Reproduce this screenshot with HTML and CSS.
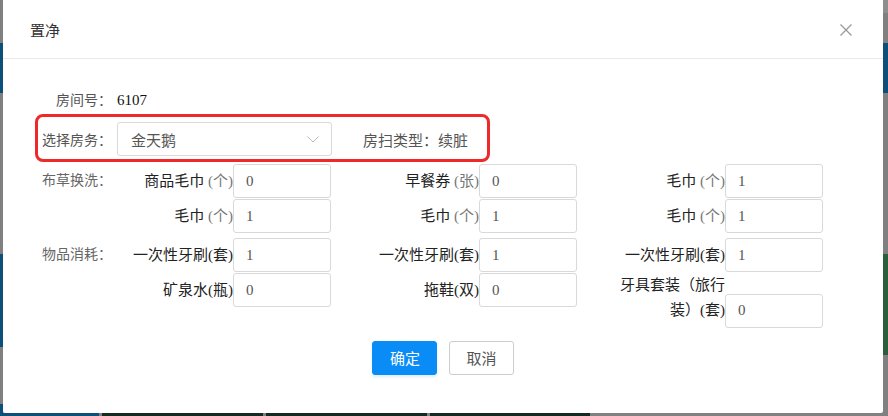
FILE: index.html
```html
<!DOCTYPE html>
<html lang="zh-CN">
<head>
<meta charset="utf-8">
<title>置净</title>
<link rel="stylesheet" href="styles.css">
</head>
<body>
<div class="modal">
  <div class="modal-header">
    <span class="modal-title">置净</span>
    <span class="close"><svg width="12" height="12" viewBox="0 0 12 12"><path d="M0.5 0.5L11.5 11.5M11.5 0.5L0.5 11.5" stroke="#999" stroke-width="1.3" fill="none"/></svg></span>
  </div>
  <div class="modal-body">
    <div class="field-row room-row">
      <span class="field-label">房间号：</span><span class="room-no">6107</span>
    </div>
    <div class="field-row select-row">
      <span class="field-label">选择房务：</span>
      <div class="select"><span>金天鹅</span><svg width="12" height="7" viewBox="0 0 12 7"><path d="M0.5 0.5L6 6L11.5 0.5" stroke="#bbb" stroke-width="1" fill="none"/></svg></div>
      <span class="clean-type">房扫类型：续脏</span>
    </div>
    <div class="section">
      <span class="section-label">布草换洗：</span>
      <div class="items">
        <div class="item"><span class="item-label">商品毛巾 <span class="unit">(个)</span></span><input class="num" type="text" value="0"></div>
        <div class="item"><span class="item-label">早餐券 <span class="unit">(张)</span></span><input class="num" type="text" value="0"></div>
        <div class="item"><span class="item-label">毛巾 <span class="unit">(个)</span></span><input class="num" type="text" value="1"></div>
        <div class="item"><span class="item-label">毛巾 <span class="unit">(个)</span></span><input class="num" type="text" value="1"></div>
        <div class="item"><span class="item-label">毛巾 <span class="unit">(个)</span></span><input class="num" type="text" value="1"></div>
        <div class="item"><span class="item-label">毛巾 <span class="unit">(个)</span></span><input class="num" type="text" value="1"></div>
      </div>
    </div>
    <div class="section second">
      <span class="section-label">物品消耗：</span>
      <div class="items">
        <div class="item"><span class="item-label">一次性牙刷(套)</span><input class="num" type="text" value="1"></div>
        <div class="item"><span class="item-label">一次性牙刷(套)</span><input class="num" type="text" value="1"></div>
        <div class="item"><span class="item-label">一次性牙刷(套)</span><input class="num" type="text" value="1"></div>
        <div class="item"><span class="item-label">矿泉水(瓶)</span><input class="num" type="text" value="0"></div>
        <div class="item"><span class="item-label">拖鞋(双)</span><input class="num" type="text" value="0"></div>
        <div class="item"><span class="item-label">牙具套装（旅行装）(套)</span><input class="num" type="text" value="0"></div>
      </div>
    </div>
    <div class="actions">
      <button class="btn btn-primary" type="button">确定</button>
      <button class="btn" type="button">取消</button>
    </div>
  </div>
  <div class="highlight"></div>
</div>
</body>
</html>
```
FILE: styles.css
```css
html, body {
  margin: 0;
  padding: 0;
}
body {
  width: 888px;
  height: 416px;
  overflow: hidden;
  position: relative;
  font-family: "Liberation Serif", "Noto Sans CJK SC", serif;
  background:
    linear-gradient(to bottom, #808080 0 43px, #0b4f7a 43px 93px, #808080 93px 254px, #0b4f7a 254px 347px, #808080 347px 404px, #0b4f7a 404px) left top / 3px 100% no-repeat,
    linear-gradient(to bottom, #8e8e8e 0 13px, #808080 13px 43px, #0b4f7a 43px 93px, #808080 93px 254px, #2b5e3c 254px 355px, #808080 355px) right top / 5px 100% no-repeat,
    linear-gradient(to right, #0b4f7a 0 99px, #808080 99px 102px, #14291f 102px 263px, #808080 263px 266px, #14291f 266px 427px, #808080 427px 430px, #14291f 430px 590px, #808080 590px) left bottom / 100% 3px no-repeat,
    #808080;
}
.modal {
  position: absolute;
  left: 3px;
  top: 0;
  width: 880px;
  height: 413px;
  background: #fff;
  border-radius: 0 0 2px 2px;
}
.modal-header {
  height: 58px;
  border-bottom: 1px solid #e9e9e9;
  display: flex;
  align-items: center;
  justify-content: space-between;
  padding: 0 31px 0 27px;
}
.modal-title {
  font-size: 15px;
  color: #333;
}
.close {
  display: flex;
  margin-top: 1px;
}
.modal-body {
  padding: 29px 0 0 38px;
}
.field-row {
  display: flex;
  align-items: center;
}
.field-label {
  width: 71px;
  text-align: right;
  font-size: 14px;
  color: #555;
  margin-right: 5px;
  flex-shrink: 0;
}
.room-row {
  height: 25px;
  line-height: 25px;
}
.room-no {
  font-size: 15px;
  color: #111;
}
.select-row {
  margin-top: 9px;
}
.select {
  width: 215px;
  height: 34px;
  box-sizing: border-box;
  border: 1px solid #d9d9d9;
  border-radius: 3px;
  display: flex;
  align-items: center;
  justify-content: space-between;
  padding: 0 12px 0 13px;
  font-size: 15px;
  color: #555;
}
.select svg {
  margin-top: 1px;
}
.clean-type {
  margin-left: 31px;
  font-size: 15px;
  color: #555;
}
.section {
  display: flex;
  align-items: flex-start;
  margin-top: 8px;
}
.section.second {
  margin-top: 5px;
}
.section-label {
  width: 71px;
  margin-right: 13px;
  flex-shrink: 0;
  text-align: right;
  font-size: 14px;
  line-height: 34px;
  color: #666;
}
.items {
  display: grid;
  grid-template-columns: repeat(3, 206px);
  column-gap: 40px;
  row-gap: 1px;
}
.item {
  font-size: 15px;
  line-height: 25px;
  white-space: normal;
}
.item-label {
  display: inline-block;
  width: 108px;
  text-align: right;
  vertical-align: baseline;
  color: #222;
}
.unit {
  color: #777;
}
.num {
  display: inline-block;
  vertical-align: baseline;
  width: 98px;
  height: 34px;
  box-sizing: border-box;
  margin: 0;
  border: 1px solid #d9d9d9;
  border-radius: 3px;
  padding: 0 12px;
  font-family: "Liberation Serif", "Noto Sans CJK SC", serif;
  font-size: 15px;
  color: #555;
  background: #fff;
  outline: none;
}
.actions {
  display: flex;
  justify-content: center;
  gap: 12px;
  margin-top: 13px;
  margin-left: -38px;
}
.btn {
  height: 34px;
  padding: 0 16px;
  border: 1px solid #ccc;
  border-radius: 3px;
  background: #fff;
  color: #555;
  font-family: "Liberation Serif", "Noto Sans CJK SC", serif;
  font-size: 15px;
}
.btn-primary {
  width: 65px;
  background: #0a8cf7;
  border-color: #0a8cf7;
  color: #fff;
  box-shadow: 0 2px 3px rgba(10, 140, 247, 0.15);
}
.highlight {
  position: absolute;
  left: 32px;
  top: 114px;
  width: 455px;
  height: 48px;
  box-sizing: border-box;
  border: 3px solid #f0282a;
  border-radius: 8px;
  pointer-events: none;
}
```
